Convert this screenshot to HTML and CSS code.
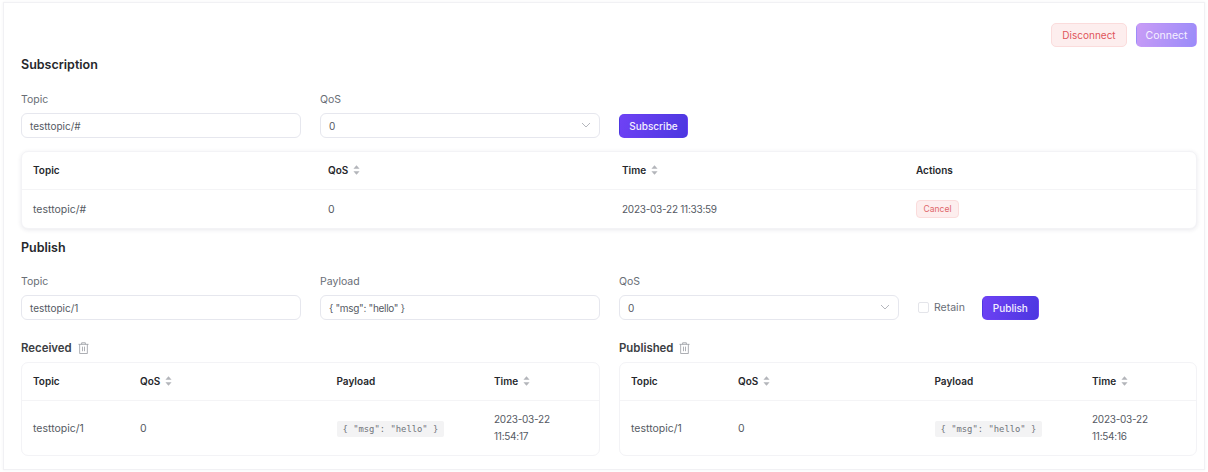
FILE: index.html
```html
<!DOCTYPE html>
<html lang="en">
<head>
<meta charset="utf-8">
<title>MQTT</title>
<link rel="stylesheet" href="styles.css">
</head>
<body>
<main class="card">
  <div class="top-actions">
    <button class="btn btn-danger">Disconnect</button>
    <button class="btn btn-connect">Connect</button>
  </div>
  <h2 class="title title-sub">Subscription</h2>
  <div class="form-row row-sub">
    <div class="field"><label class="label">Topic</label><div class="input">testtopic/#</div></div>
    <div class="field"><label class="label">QoS</label><div class="input select">0<svg class="chev" viewBox="0 0 10 6"><path d="M1 1l4 4 4-4"/></svg></div></div>
    <div class="field field-end"><button class="btn btn-primary btn-sub">Subscribe</button></div>
  </div>
  <div class="tbl tbl-sub">
    <div class="tr th grid-sub">
      <div>Topic</div>
      <div>QoS<svg class="sort" viewBox="0 0 8 11"><path d="M4 0l3.5 4h-7zM4 11L.5 7h7z"/></svg></div>
      <div>Time<svg class="sort" viewBox="0 0 8 11"><path d="M4 0l3.5 4h-7zM4 11L.5 7h7z"/></svg></div>
      <div>Actions</div>
    </div>
    <div class="tr td grid-sub">
      <div>testtopic/#</div>
      <div>0</div>
      <div class="num">2023-03-22 11:33:59</div>
      <div><button class="btn-cancel">Cancel</button></div>
    </div>
  </div>
  <h2 class="title title-pub">Publish</h2>
  <div class="form-row row-pub">
    <div class="field"><label class="label">Topic</label><div class="input">testtopic/1</div></div>
    <div class="field"><label class="label">Payload</label><div class="input input-json">{ "msg": "hello" }</div></div>
    <div class="field"><label class="label">QoS</label><div class="input select">0<svg class="chev" viewBox="0 0 10 6"><path d="M1 1l4 4 4-4"/></svg></div></div>
    <div class="field pub-end">
      <span class="check"></span><span class="retain">Retain</span>
      <button class="btn btn-primary btn-pub">Publish</button>
    </div>
  </div>
  <div class="logs">
    <section>
      <h3 class="log-title">Received<svg class="trash" viewBox="0 0 12 13"><path d="M.5 2.5h11M4 2.5V.8h4v1.7M1.8 2.5v10h8.4v-10M4.9 5v5M7.1 5v5"/></svg></h3>
      <div class="tbl">
        <div class="tr th grid-log">
          <div>Topic</div>
          <div>QoS<svg class="sort" viewBox="0 0 8 11"><path d="M4 0l3.5 4h-7zM4 11L.5 7h7z"/></svg></div>
          <div>Payload</div>
          <div>Time<svg class="sort" viewBox="0 0 8 11"><path d="M4 0l3.5 4h-7zM4 11L.5 7h7z"/></svg></div>
        </div>
        <div class="tr td td-log grid-log">
          <div>testtopic/1</div>
          <div>0</div>
          <div><code class="code">{ "msg": "hello" }</code></div>
          <div class="num">2023-03-22<br>11:54:17</div>
        </div>
      </div>
    </section>
    <section>
      <h3 class="log-title">Published<svg class="trash" viewBox="0 0 12 13"><path d="M.5 2.5h11M4 2.5V.8h4v1.7M1.8 2.5v10h8.4v-10M4.9 5v5M7.1 5v5"/></svg></h3>
      <div class="tbl">
        <div class="tr th grid-log">
          <div>Topic</div>
          <div>QoS<svg class="sort" viewBox="0 0 8 11"><path d="M4 0l3.5 4h-7zM4 11L.5 7h7z"/></svg></div>
          <div>Payload</div>
          <div>Time<svg class="sort" viewBox="0 0 8 11"><path d="M4 0l3.5 4h-7zM4 11L.5 7h7z"/></svg></div>
        </div>
        <div class="tr td td-log grid-log">
          <div>testtopic/1</div>
          <div>0</div>
          <div><code class="code">{ "msg": "hello" }</code></div>
          <div class="num">2023-03-22<br>11:54:16</div>
        </div>
      </div>
    </section>
  </div>
</main>
</body>
</html>
```
FILE: styles.css
```css
* { box-sizing: border-box; }
html, body { margin: 0; height: 472px; overflow: hidden; background: #fff; }
body {
  padding: 2px 3px;
  font-family: Inter, "Liberation Sans", sans-serif;
  font-size: 10.5px;
  color: #555a63;
}
.card {
  height: 468px;
  border: 1px solid #f1f1f4;
  box-shadow: 0 0 3px rgba(30, 30, 60, .05);
  padding: 20px 7px 0 17px;
}
.top-actions { display: flex; justify-content: flex-end; gap: 9px; height: 24px; }
.btn {
  height: 24px;
  border-radius: 5px;
  font: 400 10px Inter, "Liberation Sans", sans-serif;
  border: 1px solid transparent;
  padding: 0;
}
.btn-danger { width: 76px; background: #fdeeee; border-color: #fbdcdc; color: #e0555b; }
.btn-connect { width: 61px; color: #f6f1ff; font-size: 10.5px; background: linear-gradient(110deg, #c99cf6, #9a8bf9); }
.btn-primary { color: #f4f0ff; font-weight: 500; background: linear-gradient(110deg, #6f42f5, #4c37e0); }
.btn-sub { width: 69px; }
.btn-pub { width: 57px; }
.title { margin: 0; font-size: 12.5px; line-height: 16px; font-weight: 600; color: #26282c; }
.title-sub { margin-top: 10px; }
.title-pub { margin-top: 11px; }
.form-row {
  display: grid;
  grid-template-columns: 280px 280px 280px 1fr;
  column-gap: 19px;
}
.row-sub { margin-top: 20px; }
.row-pub { margin-top: 19px; }
.field { display: flex; flex-direction: column; justify-content: flex-end; }
.label { font-size: 10.5px; line-height: 14px; margin-bottom: 6px; color: #696e76; }
.input {
  position: relative;
  height: 25px;
  border: 1px solid #e6e7ee;
  border-radius: 6px;
  padding: 0 8px;
  font-size: 10px;
  line-height: 24px;
  color: #555a63;
  background: #fff;
}
.input-json { letter-spacing: -.3px; }
.chev { position: absolute; right: 8px; top: 8px; width: 10px; height: 6px; fill: none; stroke: #b5b7bd; stroke-width: 1; }
.pub-end { flex-direction: row; align-items: center; justify-content: flex-start; align-self: end; height: 25px; }
.check { width: 11px; height: 11px; border: 1px solid #e4e5ea; border-radius: 2px; margin-right: 5px; }
.retain { color: #696e76; margin-right: 17px; }
.tbl { border: 1px solid #f3f3f6; border-radius: 7px; background: #fff; }
.tbl-sub { box-shadow: 0 1px 4px rgba(40, 40, 80, .1); margin-top: 13px; }
.tr { display: grid; align-items: center; padding-left: 11px; }
.th { height: 38px; padding-bottom: 2px; font-size: 10px; font-weight: 600; color: #26282c; border-bottom: 1px solid #f4f4f6; }
.td { height: 38px; color: #555a63; }
.td-log { height: 54px; line-height: 17px; }
.num { font-size: 10px; letter-spacing: -.25px; }
.grid-sub { grid-template-columns: 295px 294px 294px 1fr; }
.grid-log { grid-template-columns: 107px 196.5px 157.5px 1fr; }
.sort { width: 7px; height: 10px; margin-left: 5px; vertical-align: -1.5px; fill: #b3b5ba; }
.btn-cancel {
  display: block;
  width: 43px;
  height: 18px;
  padding: 0;
  border: 1px solid #fbdcdc;
  border-radius: 4px;
  background: #fdeeee;
  color: #e0666b;
  font: 400 8.5px Inter, "Liberation Sans", sans-serif;
}
.logs { display: grid; grid-template-columns: 579px 578px; column-gap: 19px; margin-top: 20px; }
.log-title {
  display: flex;
  align-items: center;
  height: 16px;
  margin: 0 0 6px;
  font-size: 11.4px;
  font-weight: 600;
  color: #3b3e43;
}
.trash { width: 11px; height: 12px; margin-left: 6px; fill: none; stroke: #8f9298; stroke-width: .8; }
.code {
  display: inline-block;
  height: 16px;
  line-height: 16px;
  padding: 0 6px;
  border-radius: 2px;
  background: #f3f3f4;
  color: #70747a;
  font-family: "DejaVu Sans Mono", monospace;
  font-size: 8.86px;
}
```
